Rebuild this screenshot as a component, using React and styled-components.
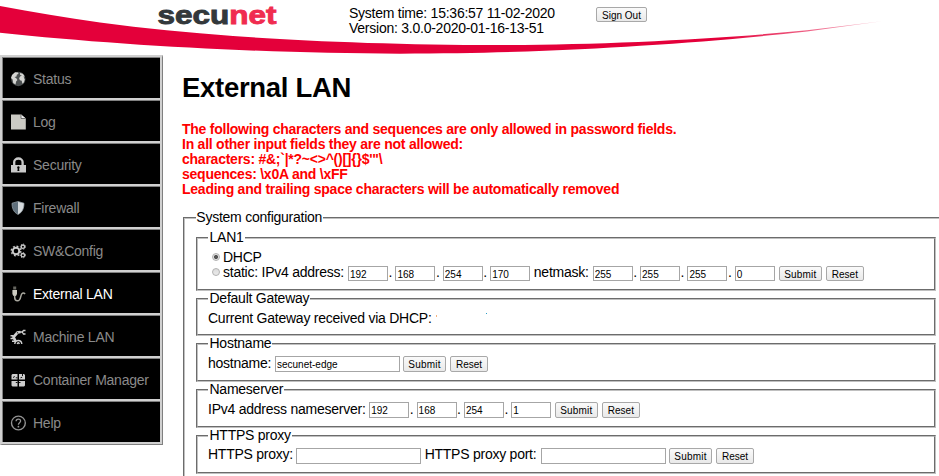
import React from "react";
import styled, { createGlobalStyle, css } from "styled-components";

const GlobalStyle = createGlobalStyle`
  * { box-sizing: border-box; }
  html, body { margin: 0; padding: 0; background: #fff; }
  body {
    width: 939px; height: 476px; overflow: hidden;
    font-family: "Liberation Sans", Arial, sans-serif;
    font-size: 14px; line-height: 15px; letter-spacing: -0.245px; color: #000;
  }
`;

const Page = styled.div`
  width: 939px;
  height: 476px;
  overflow: hidden;
`;

const Header = styled.header`
  position: relative;
  z-index: 0;
  display: flex;
  align-items: flex-start;
  height: 55px;
  padding: 6px 0 0 349px;
`;

const Banner = styled.svg`
  position: absolute;
  inset: 0;
  z-index: -1;
  letter-spacing: 0;
`;

const SystemInfo = styled.div`
  width: 247px;
  white-space: nowrap;
`;

const Columns = styled.div`
  display: flex;
  align-items: flex-start;
`;

const Sidebar = styled.nav`
  width: 163px;
  height: 390px;
  flex: none;
  border: solid #d0d0d0;
  border-width: 2px 0 0 2px;
  border-right: 1px solid #808080;
  border-bottom: 1px solid #808080;
`;

const MenuItem = styled.a`
  display: flex;
  align-items: center;
  height: 43px;
  padding: 2px 0 0 8px;
  background: #000;
  border: solid #d0d0d0;
  border-width: 0 2px 2px 0;
  box-shadow: inset 1px 1px 0 #808080;
  color: ${(p) => (p.$active ? "#fff" : "#8a8a8a")};
  white-space: nowrap;
`;

const MenuIcon = styled.svg`
  width: 16px;
  height: 16px;
  margin-right: 7px;
  flex: none;
`;

const MenuText = styled.span`
  padding-top: 2px;
`;

const Main = styled.main`
  width: 776px;
  flex: none;
  padding-left: 19px;
`;

const Title = styled.h1`
  margin: 17px 0 0;
  height: 50px;
  font-size: 27.5px;
  line-height: 32px;
  font-weight: bold;
  letter-spacing: -0.3px;
`;

const Warning = styled.p`
  margin: 0;
  height: 88px;
  color: #f00;
  font-weight: bold;
  white-space: nowrap;
`;

const Line = styled.span`
  display: block;
`;

const groove = css`
  min-width: 0;
  margin: 0;
  border: 2px groove #c0c0c0;
`;

const Configuration = styled.fieldset`
  ${groove}
  width: 766px;
  margin-left: 1px;
  padding: 4px 11px 10px;
`;

const Section = styled.fieldset`
  ${groove}
  width: 740px;
  height: ${(p) => p.$height}px;
  padding: 4px 10px 0;
`;

const Legend = styled.legend`
  height: 16px;
  padding: 0 1px 0 ${(p) => p.$inset ?? 1.5}px;
`;

const Row = styled.div`
  display: flex;
  align-items: flex-start;
  height: 15px;
  white-space: nowrap;
`;

const Label = styled.span`
  width: ${(p) => p.$width}px;
  margin-top: ${(p) => (p.$raised ? -1 : 0)}px;
  flex: none;
`;

const Radio = styled.span`
  width: 8px;
  height: 8px;
  margin: 3px 3px 0 4px;
  flex: none;
  border: 1px solid #b2b2b2;
  border-radius: 50%;
  background: ${(p) =>
    p.$on ? "radial-gradient(circle, #555 0 1.6px, #e2e2e2 2.4px)" : "linear-gradient(#dcdcdc, #eaeaea)"};
`;

const Field = styled.input`
  width: ${(p) => p.$width || 40}px;
  height: ${(p) => (p.$compact ? 15 : 16)}px;
  margin: ${(p) => (p.$compact ? 1 : 0)}px 0 0;
  flex: none;
  padding: 1px 0 0 1px;
  border: 1px solid #a6a6a6;
  border-radius: 0;
  background: #fff;
  font: 10px "Liberation Sans", Arial, sans-serif;
  color: #000;
`;

const Dot = styled.span`
  width: 7.4px;
  padding-left: 0.5px;
  flex: none;
`;

const Button = styled.button`
  width: ${(p) => p.$width}px;
  height: ${(p) => (p.$compact ? 15 : 16)}px;
  margin: ${(p) => (p.$compact ? 1 : 0)}px 0 0 ${(p) => p.$gap || 0}px;
  flex: none;
  padding: 1px 0 0;
  border: 1px solid #a8a8a8;
  border-radius: 2px;
  background: linear-gradient(#fafafa, #e9e9e9);
  font: 10px/11px "Liberation Sans", Arial, sans-serif;
  letter-spacing: ${(p) => p.$spacing || 0}px;
  color: #000;
`;

const Speck = styled.span`
  width: 1px;
  height: ${(p) => p.$height}px;
  margin: ${(p) => p.$top}px ${(p) => p.$after || 0}px 0 0;
  background: ${(p) => p.$color};
`;

const icons = {
  globe: (
    <>
      <circle cx="8.3" cy="8" r="7.2" fill="#4b4f50" />
      <path d="M2 4l3-2.7 3 .2.5 1.3-1.7 1-.3 1.6-2 .7 1.8 1.2 1.1 1.6-1.3 1.5-.6 3L3.2 12 2.6 8.5 1 7zM10 2l2.8.7 2 2.8-1.2-.3.6 2.2.6 1-1 3-1.4 1.3-.7-3-1.8-.5-.8-2 1.2-2 1.7-.4-1.9-.8z" fill="#d5d5d2" />
    </>
  ),
  file: (
    <>
      <path d="M1 .5h10l4.800 4v11H1z" fill="#cbcac4" />
      <path d="M11 .5v4h4.800" fill="#eee" stroke="#555" strokeWidth=".8" />
    </>
  ),
  lock: (
    <>
      <path d="M4.200 8V5a4.200 3.500 0 0 1 8.400 0v3" fill="none" stroke="#c9c9c9" strokeWidth="2.300" />
      <path d="M1 8h15v7.500H1z" fill="#c9c9c9" />
      <path d="M8.400 9.300a1.400 1.400 0 0 0-.7 2.500L7.400 14h2l-.3-2.200a1.400 1.400 0 0 0-.7-2.500z" fill="#000" />
    </>
  ),
  shield: (
    <>
      <path d="M8 1.5L2 3.2c0 5 1.4 8.800 6 11.300z" fill="#60707c" />
      <path d="M8 1.5l6 1.700c0 5-1.400 8.800-6 11.300z" fill="#d5dadd" />
      <path d="M8 1.5l6 1.700c0 5-1.400 8.800-6 11.300-4.600-2.500-6-6.300-6-11.300z" fill="none" stroke="#9aa5ac" strokeWidth=".7" />
    </>
  ),
  gears: (
    <g fill="none" stroke="#c9c9c9">
      <circle cx="6" cy="8" r="3.300" strokeWidth="2" />
      <circle cx="6" cy="8" r="4.800" strokeWidth="1.300" strokeDasharray="1.900 1.870" />
      <circle cx="12.900" cy="3.700" r="1.700" strokeWidth="1.300" />
      <circle cx="12.900" cy="3.700" r="2.600" strokeWidth=".9" strokeDasharray="1.200 1.200" />
      <circle cx="12.900" cy="12.200" r="1.700" strokeWidth="1.300" />
      <circle cx="12.900" cy="12.200" r="2.600" strokeWidth=".9" strokeDasharray="1.200 1.200" />
    </g>
  ),
  plug: (
    <>
      <path d="M3.200 .5h3v3h-3z" fill="#66665f" />
      <path d="M2.400 4h4.600v4L6 10H3.500L2.400 8z" fill="#cbcac0" />
      <path d="M4.700 9.500v2c0 2.200 1.200 3.300 2.800 3.300 4.200 0 2.400-6.800 5-7.600 1.200-.3 2 .1 2.700.6" fill="none" stroke="#aaa9a0" strokeWidth="1.500" />
    </>
  ),
  robot: (
    <>
      <g fill="none" stroke="#d0d0d0">
        <path d="M10.500 3L7.500 3.500 3.500 8l2 4" strokeWidth="2.700" />
        <path d="M10 3h2.200l1.300-1.500h2M12.200 3l1.300 2h2" strokeWidth="1.300" />
        <path d="M.5 6.800h3M.5 9.500h4M2 12.200h4" strokeWidth="1.500" />
        <path d="M4.800 15c.4-4.600 6.600-4.600 7 0M7.300 15c.3-1.600 1.700-1.600 2 0" strokeWidth="1.400" />
      </g>
      <circle cx="7.500" cy="3.800" r=".7" fill="#333" />
    </>
  ),
  containers: (
    <>
      <path d="M2.500 2h5v5.500h-6V3zM9 2h5l1 1v4.500H9zM1.500 9h6v5.500h-5l-1-1zM9 9h6v4.500l-1 1H9z" fill="#cdcdcd" />
      <path d="M3 5.500l1.800-1M5.800 5.800h1.700M10.500 5.800l1.700-.6M12.500 2v2M5.800 10.500h1.700M9 10.500h1.500" stroke="#111" strokeWidth="1" />
    </>
  ),
  help: (
    <>
      <circle cx="8.400" cy="8" r="6.900" fill="none" stroke="#939393" strokeWidth="1.400" />
      <path d="M6.100 6.300c0-3 4.500-2.800 4.500-.2 0 1.700-2.200 1.600-2.200 3.600" fill="none" stroke="#939393" strokeWidth="1.300" />
      <circle cx="8.400" cy="11.700" r=".9" fill="#939393" />
    </>
  ),
};

const menu = [
  ["globe", "Status"],
  ["file", "Log"],
  ["lock", "Security"],
  ["shield", "Firewall"],
  ["gears", "SW&Config"],
  ["plug", "External LAN"],
  ["robot", "Machine LAN"],
  ["containers", "Container Manager"],
  ["help", "Help"],
];

const Address = ({ octets, compact }) =>
  octets.map((octet, i) => (
    <React.Fragment key={i}>
      <Field defaultValue={octet} $compact={compact} />
      {i < 3 && <Dot>.</Dot>}
    </React.Fragment>
  ));

const Actions = ({ compact, gap = 3 }) => (
  <>
    <Button $width={43} $gap={gap} $spacing={0.2} $compact={compact}>Submit</Button>
    <Button $width={38} $gap={4} $compact={compact}>Reset</Button>
  </>
);

export default function App() {
  return (
    <Page>
      <GlobalStyle />
      <Header>
        <Banner width="939" height="55" viewBox="0 0 939 55">
          <defs>
            <linearGradient id="sweep" gradientUnits="userSpaceOnUse" x1="0" y1="0" x2="884" y2="0">
              <stop offset="0.82" stopColor="#e4003a" />
              <stop offset="1" stopColor="#e4003a" stopOpacity="0.25" />
            </linearGradient>
          </defs>
          <path
            d="M0 6C33 12 66 17.5 100 22.5C145 28.5 188 32.5 233 36C300 41 400 45 497 45C600 45 720 39 807 30.3L882 21.3L807 31.6C740 38.5 700 42 640 45.8C580 50 500 53.5 400 53.7C270 53.5 120 45.5 0 32.7Z"
            fill="url(#sweep)"
          />
          <text x="157.500" y="23.700" fontFamily="Liberation Sans" fontWeight="bold" fontSize="26" textLength="119" lengthAdjust="spacingAndGlyphs" strokeWidth="0.9">
            <tspan fill="#33383b" stroke="#33383b">secu</tspan>
            <tspan fill="#f02c50" stroke="#f02c50">net</tspan>
          </text>
        </Banner>
        <SystemInfo>
          <Line>System time: 15:36:57 11-02-2020</Line>
          <Line>Version: 3.0.0-2020-01-16-13-51</Line>
        </SystemInfo>
        <Button $width={51} $compact>Sign Out</Button>
      </Header>
      <Columns>
        <Sidebar>
          {menu.map(([icon, label]) => (
            <MenuItem key={label} $active={label === "External LAN"}>
              <MenuIcon viewBox="0 0 16 16">{icons[icon]}</MenuIcon>
              <MenuText>{label}</MenuText>
            </MenuItem>
          ))}
        </Sidebar>
        <Main>
          <Title>External LAN</Title>
          <Warning>
            <Line>The following characters and sequences are only allowed in password fields.</Line>
            <Line>In all other input fields they are not allowed:</Line>
            <Line>{"characters: #&;`|*?~<>^()[]{}$'\"\\"}</Line>
            <Line>{"sequences: \\x0A and \\xFF"}</Line>
            <Line>Leading and trailing space characters will be automatically removed</Line>
          </Warning>
          <Configuration>
            <Legend $inset={0.3}>System configuration</Legend>
            <Section $height={61}>
              <Legend>LAN1</Legend>
              <Row>
                <Radio $on />
                <Label>DHCP</Label>
              </Row>
              <Row>
                <Radio />
                <Label $width={125}>static: IPv4 address:</Label>
                <Address octets={[192, 168, 254, 170]} compact />
                <Label $width={62.5}>&nbsp;netmask:</Label>
                <Address octets={[255, 255, 255, 0]} compact />
                <Actions compact gap={4} />
              </Row>
            </Section>
            <Section $height={45}>
              <Legend>Default Gateway</Legend>
              <Row>
                <Label $width={228}>Current Gateway received via DHCP:</Label>
                <Speck $top={4} $height={2} $after={49} $color="#f5b27e" />
                <Speck $top={2} $height={1} $color="#2aa0c8" />
              </Row>
            </Section>
            <Section $height={46}>
              <Legend>Hostname</Legend>
              <Row>
                <Label $width={67}>hostname:</Label>
                <Field $width={125} defaultValue="secunet-edge" />
                <Actions />
              </Row>
            </Section>
            <Section $height={46}>
              <Legend>Nameserver</Legend>
              <Row>
                <Label $width={161.2}>IPv4 address nameserver:</Label>
                <Address octets={[192, 168, 254, 1]} />
                <Actions gap={3.5} />
              </Row>
            </Section>
            <Section $height={46}>
              <Legend>HTTPS proxy</Legend>
              <Row>
                <Label $width={88} $raised>HTTPS proxy:</Label>
                <Field $width={125} />
                <Label $width={120} $raised>&nbsp;HTTPS proxy port:</Label>
                <Field $width={125} />
                <Actions />
              </Row>
            </Section>
          </Configuration>
        </Main>
      </Columns>
    </Page>
  );
}
